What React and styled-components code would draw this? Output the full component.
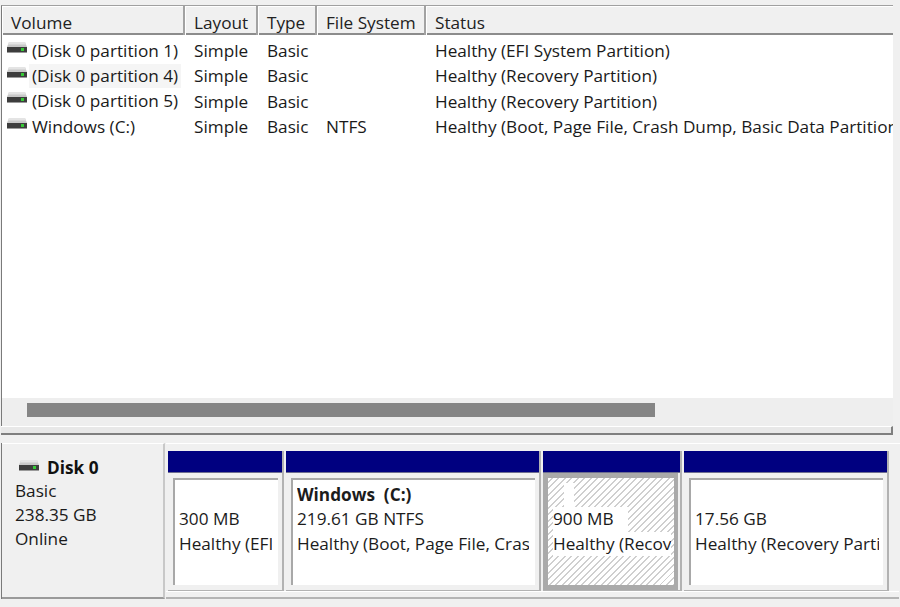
import React from "react";
import styled, { createGlobalStyle } from "styled-components";

const Global = createGlobalStyle`
  html, body { margin: 0; padding: 0; background: #f0f0f0; }
  body { font-family: "Open Sans", "Noto Sans", "Liberation Sans", sans-serif; font-size: 17.2px; color: #1a1a1a; overflow: hidden; }
`;

const Page = styled.div`
  width: 900px; height: 607px; display: flex; flex-direction: column; overflow: hidden;
  background: #f0f0f0; padding-top: 5px; box-sizing: border-box;
`;
const TopPane = styled.section`
  width: 892px; height: 421px; display: flex; flex-direction: column; flex: none;
  box-sizing: border-box; margin-left: 1px; border-top: 1px solid #a0a0a0; border-left: 1px solid #7a7a7a;
`;
const columns = "183px 73px 59px 109px 1fr";
const Header = styled.div`
  display: grid; grid-template-columns: ${columns}; height: 29px; flex: none;
  background: #f0f0f0; border-bottom: 2px solid #8c8c8c; box-sizing: border-box;
`;
const HeaderCell = styled.div`
  padding: 4px 0 0 9px; line-height: 25px; white-space: nowrap;
  border-right: 2px solid #a2a2a2; box-shadow: inset 1px 1px 0 #fff; color: #222;
  &:last-child { border-right: none; }
`;
const List = styled.div`
  flex: 1; background: #fff; padding-top: 3px; overflow: hidden; min-height: 0;
`;
const Row = styled.div`
  display: grid; grid-template-columns: ${columns}; height: 25.4px; line-height: 25.4px; white-space: nowrap;
`;
const Cell = styled.div`
  padding-left: 9px; overflow: hidden;
`;
const VolumeCell = styled.div`
  display: flex; align-items: center; padding-left: 5px; gap: 2px;
`;
const VolumeName = styled.span`
  padding: 0 3px 0 3px; line-height: 24px; background: ${p => (p.$hover ? "#f5f5f5" : "transparent")};
`;
const IconSlot = styled.span`
  display: inline-flex; flex: none; margin-top: ${p => p.$lift}px;
`;
const Track = styled.div`
  height: 28px; flex: none; background: #eeeeee; padding: 5px 0 0 25px; box-sizing: border-box;
`;
const Thumb = styled.div`
  width: 628px; height: 14px; background: #858585;
`;
const Splitter = styled.div`
  width: 892px; height: 9px; flex: none; margin-left: 1px; box-sizing: border-box;
  border-top: 1px solid #fff; border-bottom: 2px solid #7f7f7f; border-right: 2px solid #7f7f7f; background: #e8e8e8;
`;
const LowerPane = styled.section`
  display: flex; margin-top: 8px; margin-left: 1px; height: 156px; flex: none; border-left: 1px solid #7a7a7a;
`;
const DiskCard = styled.div`
  width: 163px; box-sizing: border-box; flex: none; border-top: 1px solid #fff;
  border-right: 2px solid #c8c8c8; border-bottom: 2px solid #9a9a9a; padding: 12px 0 0 13px; line-height: 24px;
`;
const DiskTitle = styled.div`
  display: flex; align-items: center; gap: 8px; padding-left: 4px; font-weight: 700; height: 23px; line-height: 23px; color: #111;
`;
const Partitions = styled.div`
  flex: 1; display: flex; flex-direction: column; margin-left: 1px;
  border-top: 1px solid #fff;
`;
const Strip = styled.div`
  display: flex; gap: 2px; padding: 7px 0 0 2px; height: 140px; flex: none;
`;
const Footer = styled.div`
  flex: none; width: 733px; height: 8px; box-sizing: border-box; border-top: 1px solid #fff; border-bottom: 2px solid #b4b4b4;
`;
const Slot = styled.div`
  width: ${p => p.$w}px; flex: none; display: flex; flex-direction: column; box-sizing: border-box;
  border-right: 2px solid #b2b2b2; border-bottom: 1px solid #b2b2b2; height: 140px;
`;
const Bar = styled.div`
  height: 22px; flex: none; background: #000080; border-bottom: 1px solid #6d6d90; box-sizing: border-box;
`;
const Body = styled.div`
  flex: 1; display: flex; padding: 5px 4px 5px 5px; min-height: 0;
  background: ${p => (p.$selected ? "#aaaaaa" : "#f0f0f0")};
  margin-right: ${p => (p.$selected ? 2 : 0)}px;
`;
const Inner = styled.div`
  flex: 1; min-width: 0; overflow: hidden; box-sizing: border-box; padding: ${p => (p.$hatch ? "5px 3px 0 5px" : "3px 0 0 4px")};
  line-height: 24.3px; white-space: nowrap;
  background: ${p => p.$hatch ? "repeating-linear-gradient(-45deg, #cfcfcf 0 1.4px, #ffffff 1.4px 4.6px)" : "#fff"};
  border-top: ${p => p.$hatch ? "none" : "2px solid #a8a8a8"};
  border-left: ${p => p.$hatch ? "none" : "2px solid #a8a8a8"};
`;
const Line = styled.div`
  height: 24.3px; color: #1c1c1c; overflow: hidden; margin-right: ${p => p.$clip ?? 6}px;
  font-weight: ${p => (p.$bold ? 700 : 400)};
  white-space: pre;
`;
const Masked = styled.div`
  height: 24.3px; background: #fff; width: ${p => p.$w}; overflow: hidden; margin-left: ${p => p.$ml || 0}px;
`;

const DiskIcon = ({ lift }) => (
  <IconSlot $lift={lift}>
    <svg width="20" height="11" viewBox="0 0 20 11">
      <path d="M2 0 H18 L20 5 H0 Z" fill="#c8c8c8" />
      <path d="M2 0 H18 L19 2.5 H1 Z" fill="#e4e4e4" />
      <rect x="0" y="5" width="20" height="5" fill="#3d3d3d" />
      <rect x="0" y="10" width="20" height="1" fill="#9a9a9a" />
      <rect x="14" y="6" width="3" height="3" fill="#35c935" />
    </svg>
  </IconSlot>
);

const rows = [
  ["(Disk 0 partition 1)", "Simple", "Basic", "", "Healthy (EFI System Partition)"],
  ["(Disk 0 partition 4)", "Simple", "Basic", "", "Healthy (Recovery Partition)", true],
  ["(Disk 0 partition 5)", "Simple", "Basic", "", "Healthy (Recovery Partition)"],
  ["Windows (C:)", "Simple", "Basic", "NTFS", "Healthy (Boot, Page File, Crash Dump, Basic Data Partition)"],
];

export default function App() {
  return (
    <Page>
      <Global />
      <TopPane>
        <Header>
          <HeaderCell>Volume</HeaderCell>
          <HeaderCell>Layout</HeaderCell>
          <HeaderCell>Type</HeaderCell>
          <HeaderCell>File System</HeaderCell>
          <HeaderCell>Status</HeaderCell>
        </Header>
        <List>
          {rows.map(([v, l, t, f, s, hover]) => (
            <Row key={v}>
              <VolumeCell>
                <DiskIcon lift={-7} />
                <VolumeName $hover={hover}>{v}</VolumeName>
              </VolumeCell>
              <Cell>{l}</Cell>
              <Cell>{t}</Cell>
              <Cell>{f}</Cell>
              <Cell>{s}</Cell>
            </Row>
          ))}
        </List>
        <Track><Thumb /></Track>
      </TopPane>
      <Splitter />
      <LowerPane>
        <DiskCard>
          <DiskTitle><DiskIcon lift={-5} />Disk 0</DiskTitle>
          <div>Basic</div>
          <div>238.35 GB</div>
          <div>Online</div>
        </DiskCard>
        <Partitions>
          <Strip>
            <Slot $w={116}>
              <Bar />
              <Body>
                <Inner>
                  <Line> </Line>
                  <Line>300 MB</Line>
                  <Line>Healthy (EFI System Partition)</Line>
                </Inner>
              </Body>
            </Slot>
            <Slot $w={255}>
              <Bar />
              <Body>
                <Inner>
                  <Line $bold>Windows  (C:)</Line>
                  <Line>219.61 GB NTFS</Line>
                  <Line>Healthy (Boot, Page File, Crash Dump, Basic Data Partition)</Line>
                </Inner>
              </Body>
            </Slot>
            <Slot $w={139}>
              <Bar />
              <Body $selected>
                <Inner $hatch>
                  <Masked $w="10px" $ml={11} />
                  <Masked $w="75px">900 MB</Masked>
                  <Masked $w="100%">Healthy (Recovery Partition)</Masked>
                </Inner>
              </Body>
            </Slot>
            <Slot $w={205}>
              <Bar />
              <Body>
                <Inner>
                  <Line> </Line>
                  <Line>17.56 GB</Line>
                  <Line $clip={4}>Healthy (Recovery Partition)</Line>
                </Inner>
              </Body>
            </Slot>
          </Strip>
          <Footer />
        </Partitions>
      </LowerPane>
    </Page>
  );
}
